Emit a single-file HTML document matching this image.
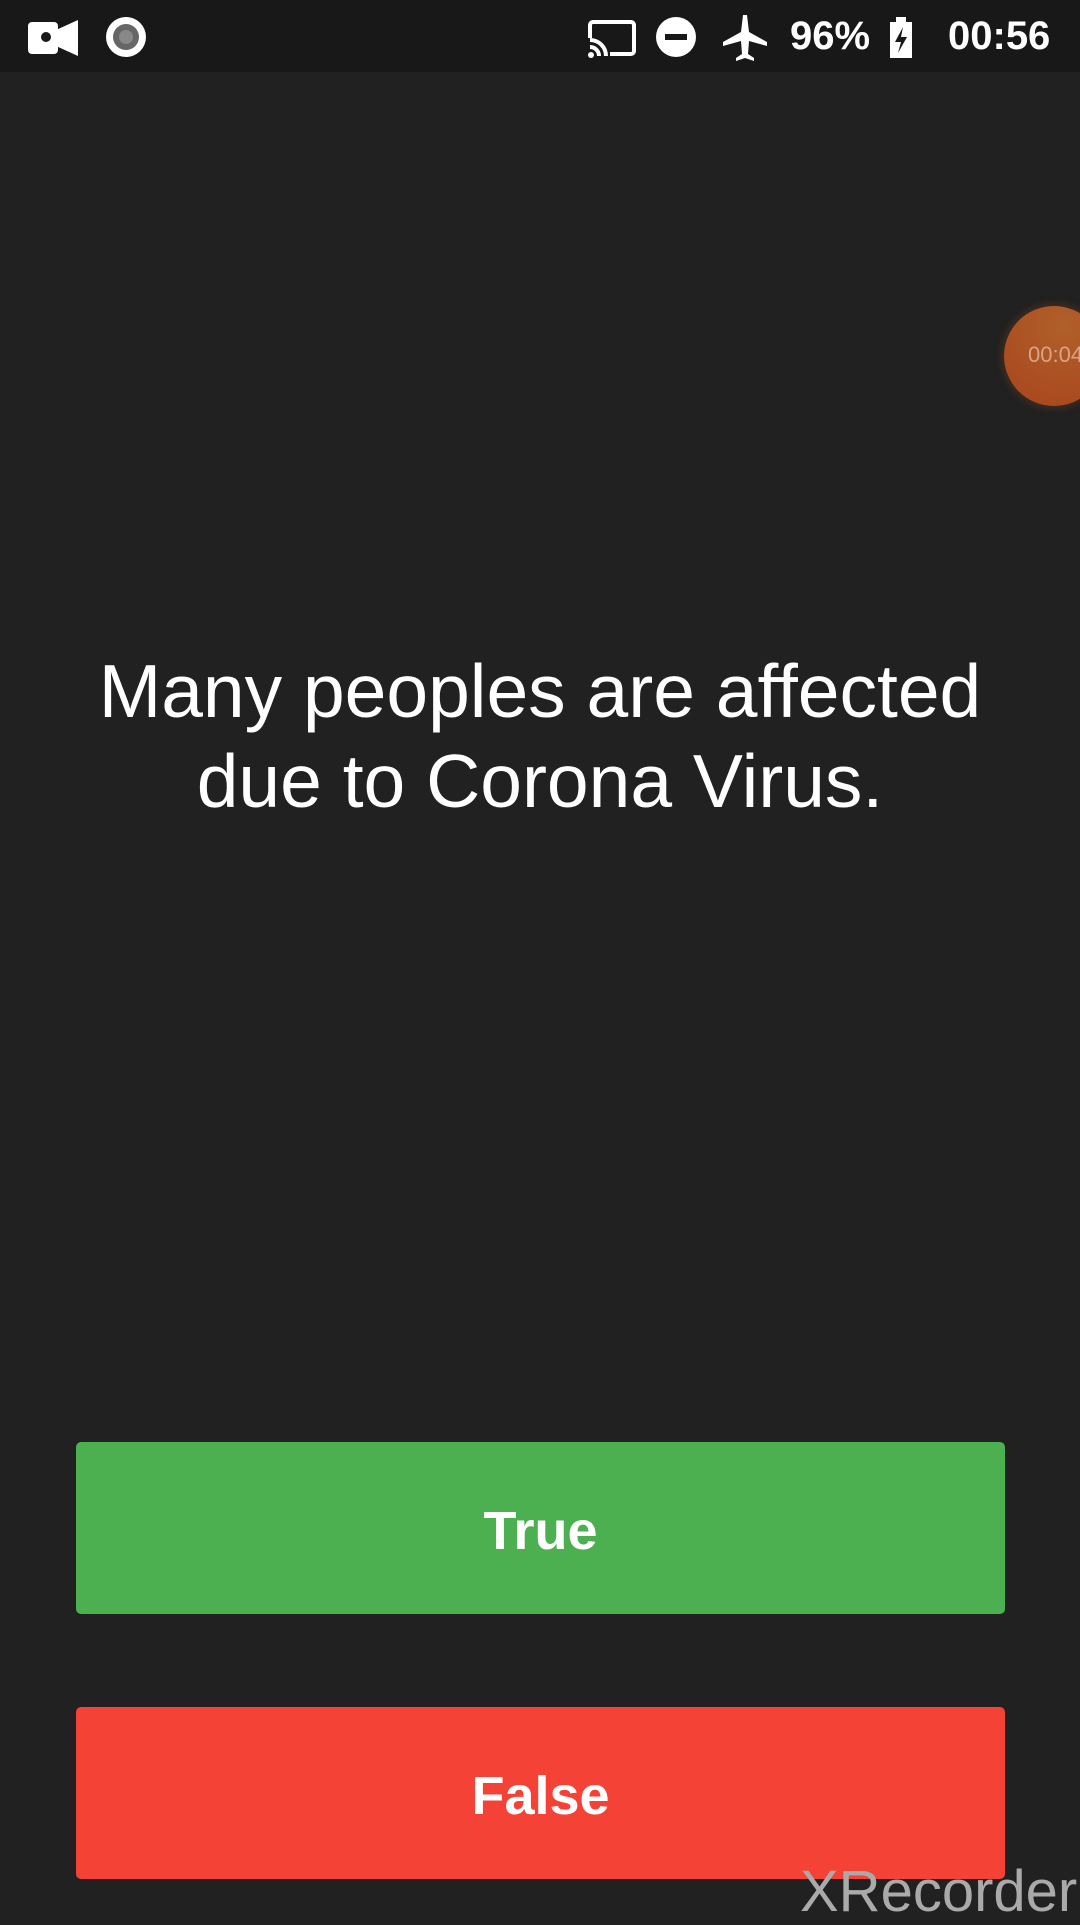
<!DOCTYPE html>
<html><head><meta charset="utf-8"><style>
body{margin:0;width:1080px;height:1920px;background:#212121;position:relative;overflow:hidden;font-family:"Liberation Sans",sans-serif;color:#fff}
.sb{position:absolute;left:0;top:0;width:1080px;height:72px;background:#181818}
.q{position:absolute;left:0;width:1080px;top:646px;text-align:center;font-size:75px;line-height:90px}
.btn{position:absolute;left:76px;width:929px;height:172px;border-radius:5px;text-align:center;line-height:178px;font-weight:bold;font-size:54px}
</style></head><body>
<div class="sb">
<svg width="1080" height="72" style="position:absolute;left:0;top:0">
<rect x="28" y="22" width="30" height="32" rx="4" fill="#fff"/><path d="M56 30 L78 20 L78 56 L56 46Z" fill="#fff"/><circle cx="46" cy="37" r="5" fill="#181818"/>
<circle cx="126" cy="37" r="20" fill="#fff"/><circle cx="126" cy="37" r="13" fill="#666"/><circle cx="126" cy="37" r="7" fill="#888"/>
<rect x="590" y="22" width="44" height="32" rx="3" fill="none" stroke="#fff" stroke-width="4"/><rect x="586" y="38" width="24" height="20" fill="#181818"/>
<path d="M590 40a16 16 0 0 1 16 16M590 47a9 9 0 0 1 9 9" stroke="#fff" stroke-width="4" fill="none"/><circle cx="591" cy="55" r="3" fill="#fff"/>
<circle cx="676" cy="37" r="20" fill="#fff"/><rect x="665" y="34" width="22" height="6" fill="#181818"/>
<path d="M743 15 L747 15 L749 32 L767 42 L767 46 L749 41 L748 54 L754 58 L754 61 L745 58 L736 61 L736 58 L742 54 L741 41 L723 46 L723 42 L741 32Z" fill="#fff"/>
<rect x="890" y="22" width="22" height="36" fill="#fff"/><rect x="896" y="17" width="10" height="6" fill="#fff"/><path d="M903 27 L895 42 L901 42 L898 53 L907 37 L901 37Z" fill="#181818"/>
</svg>
<div style="position:absolute;left:790px;top:14px;font-size:40px;font-weight:bold">96%</div>
<div style="position:absolute;left:948px;top:14px;font-size:40px;font-weight:bold">00:56</div>
</div>
<div style="position:absolute;left:1004px;top:306px;width:100px;height:100px;border-radius:50%;background:radial-gradient(circle at 60% 20%,#b0602a,#a8441c);box-shadow:0 0 6px 4px #3a2a22"></div>
<div style="position:absolute;left:1028px;top:342px;font-size:22px;color:#d9a386">00:04</div>
<div class="q">Many peoples are affected<br>due to Corona Virus.</div>
<div class="btn" style="top:1442px;background:#4caf50">True</div>
<div class="btn" style="top:1707px;background:#f44336">False</div>
<div style="position:absolute;left:800px;top:1858px;font-size:58px;color:#aaa;letter-spacing:0px">XRecorder</div>
</body></html>
